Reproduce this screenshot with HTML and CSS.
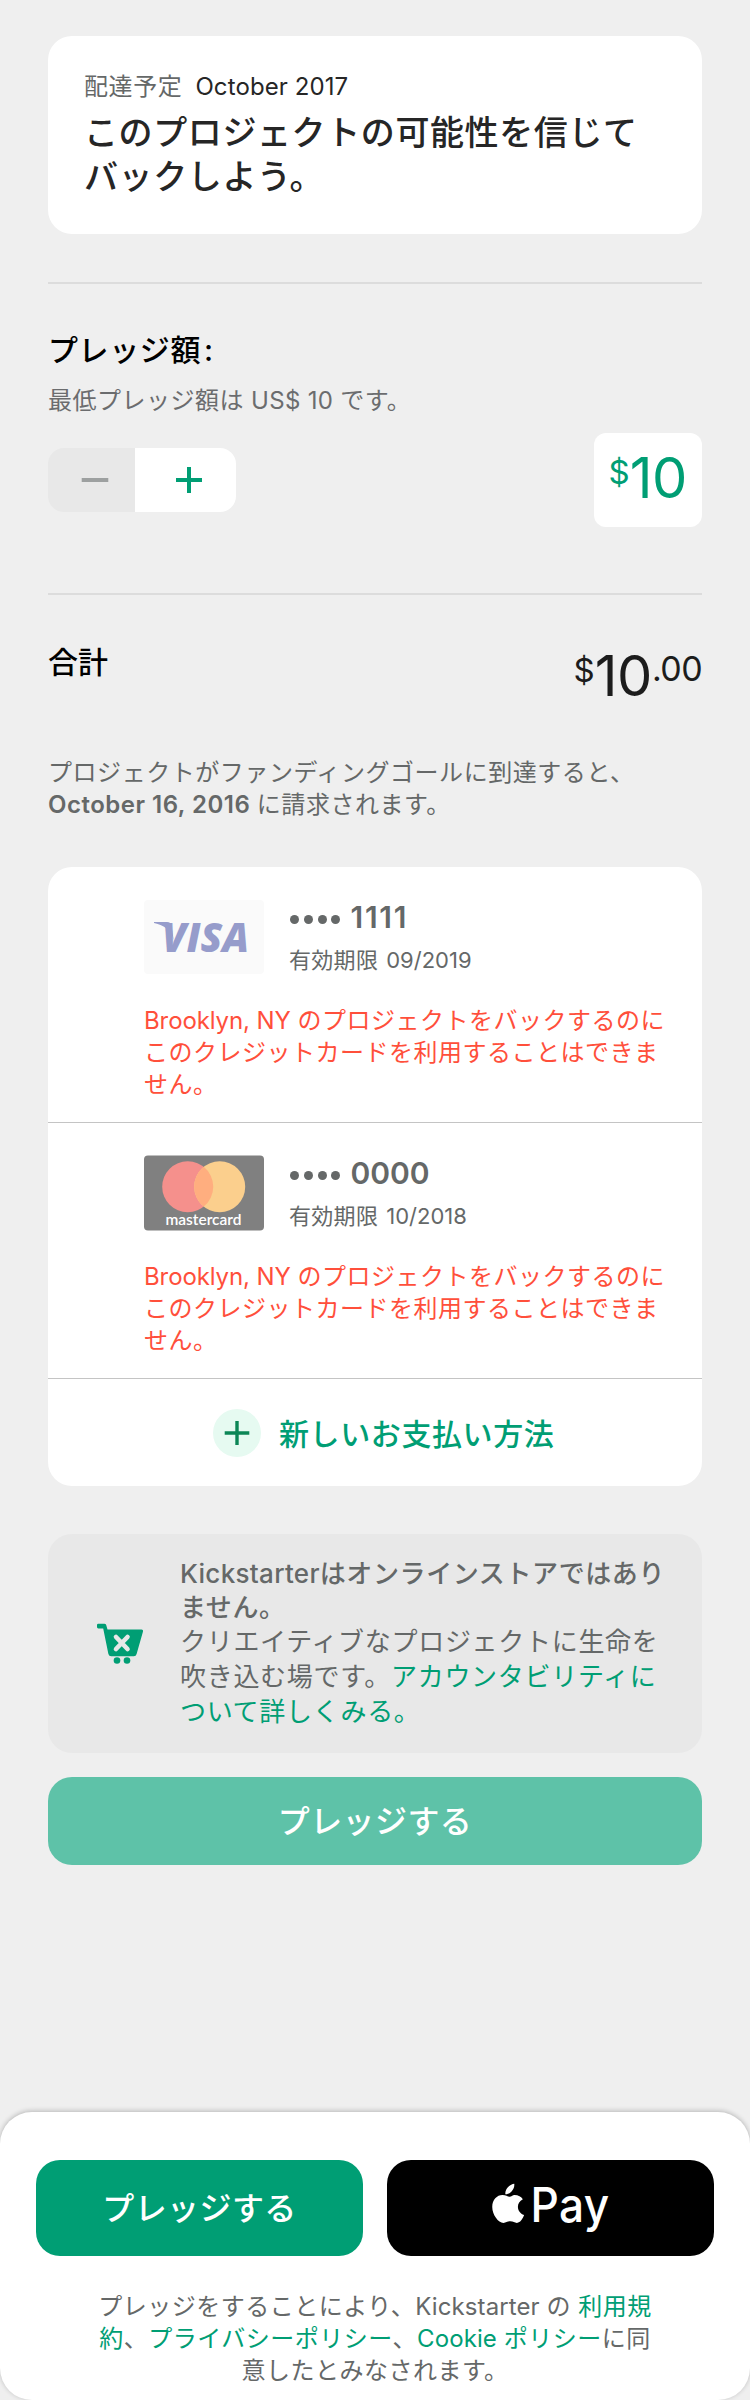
FILE: index.html
```html
<!DOCTYPE html>
<html lang="ja">
<head>
<meta charset="utf-8">
<title>プレッジ</title>
<link rel="stylesheet" href="styles.css">
</head>
<body>
<div class="screen">
  <main class="content">
    <section class="reward">
      <p class="reward-delivery"><span class="muted">配達予定</span><span class="reward-date">October 2017</span></p>
      <h1 class="reward-title">このプロジェクトの可能性を信じて<br>バックしよう。</h1>
    </section>
    <hr class="rule">
    <section class="pledge">
      <h2 class="heading">プレッジ額<span class="colon">:</span></h2>
      <p class="pledge-note">最低プレッジ額は<span class="latin-note"> US$ 10 </span>です。</p>
      <div class="pledge-row">
        <div class="stepper">
          <button class="step step-minus" aria-label="減らす"><svg width="28" height="28" viewBox="0 0 28 28"><path d="M.7 14h26.6" stroke="#9da0a0" stroke-width="4"/></svg></button>
          <button class="step step-plus" aria-label="増やす"><svg width="28" height="28" viewBox="0 0 28 28"><path d="M1 14h26M14 1v26" stroke="#009e74" stroke-width="4"/></svg></button>
        </div>
        <div class="amount-box"><span class="money"><span class="currency">$</span><span class="whole">10</span></span></div>
      </div>
    </section>
    <hr class="rule">
    <section class="total">
      <h2 class="heading total-label">合計</h2>
      <span class="money money-total"><span class="currency">$</span><span class="whole">10</span><span class="cents">.00</span></span>
    </section>
    <p class="charge-note">プロジェクトがファンディングゴールに到達すると、<br><strong class="charge-date">October 16, 2016 </strong>に請求されます。</p>

    <section class="methods">
      <article class="method">
        <div class="method-head">
          <svg class="card-art" width="120" height="76" viewBox="0 0 120 76">
            <rect y="1" width="120" height="74" rx="4" fill="#fafafa"/>
            <g fill="#969ccb">
              <path d="M10 23h13q4 0 4.600 4l2 14q-4-14-19.600-17z"/>
              <text class="visa-text" x="18" y="53" textLength="87" lengthAdjust="spacingAndGlyphs">VISA</text>
            </g>
          </svg>
          <div class="method-info">
            <p class="method-number"><span class="dots"><i></i><i></i><i></i><i></i></span><span class="digits digits-ones">1111</span></p>
            <p class="method-expiry">有効期限<span class="expiry-date">09/2019</span></p>
          </div>
        </div>
        <p class="method-error"><span class="latin-error">Brooklyn, NY </span>のプロジェクトをバックするのに<br>このクレジットカードを利用することはできま<br>せん。</p>
      </article>
      <article class="method">
        <div class="method-head">
          <svg class="card-art" width="120" height="76" viewBox="0 0 120 76">
            <rect y=".5" width="120" height="75" rx="4" fill="#808080"/>
            <circle cx="43.7" cy="31.7" r="25.5" fill="#f5908c"/>
            <circle cx="75.7" cy="31.7" r="25.5" fill="#fbcf8d"/>
            <path d="M59.7 11.8a25.5 25.5 0 0 1 0 39.8a25.5 25.5 0 0 1 0-39.8z" fill="#ffae7f"/>
            <text class="mc-text" x="21.500" y="70" textLength="76" lengthAdjust="spacingAndGlyphs">mastercard</text>
          </svg>
          <div class="method-info">
            <p class="method-number"><span class="dots"><i></i><i></i><i></i><i></i></span><span class="digits">0000</span></p>
            <p class="method-expiry">有効期限<span class="expiry-date">10/2018</span></p>
          </div>
        </div>
        <p class="method-error"><span class="latin-error">Brooklyn, NY </span>のプロジェクトをバックするのに<br>このクレジットカードを利用することはできま<br>せん。</p>
      </article>
      <button class="add-method">
        <svg width="48" height="48" viewBox="0 0 48 48"><circle cx="24" cy="24" r="24" fill="#e6faf1"/><path d="M11.7 24h24.6M24 12v24" stroke="#0c8656" stroke-width="3.4"/></svg>
        <span>新しいお支払い方法</span>
      </button>
    </section>

    <section class="notice">
      <svg class="cart" width="48" height="42" viewBox="0 0 48 42">
        <path d="M2.3 .7h6q1.500 0 1.900 1.400L11.500 6.400h34q2 0 1.500 2l-6.400 22.600q-.6 2.300-2.800 2.300H15.200q-2.200 0-2.800-2.300L7.200 5.400H2.300Q1 5.400 1 4.100V2Q1 .7 2.300.7z" fill="#009e74"/>
        <path d="M20 14l11.500 12M31.500 14L20 26" stroke="#e8e8e8" stroke-width="4.600" stroke-linecap="round"/>
        <circle cx="21" cy="37.500" r="3.300" fill="#009e74"/><circle cx="31" cy="37.500" r="3.300" fill="#009e74"/>
      </svg>
      <div class="notice-text">
        <p class="notice-strong"><span class="latin-notice">Kickstarter</span>はオンラインストアではあり<br>ません。</p>
        <p class="notice-body">クリエイティブなプロジェクトに生命を<br>吹き込む場です。<a class="link">アカウンタビリティに<br>ついて詳しくみる。</a></p>
      </div>
    </section>
    <button class="button button-disabled">プレッジする</button>
  </main>

  <footer class="sheet">
    <div class="sheet-actions">
      <button class="button button-primary">プレッジする</button>
      <button class="button button-apple" aria-label="Apple Pay">
        <svg width="120" height="60" viewBox="0 0 120 60">
          <path d="M26.800 1.500c.4 3.300-.9 6.200-2.700 8.300-1.800 2.100-4.300 3.300-6.100 3-.4-3 1-5.900 2.700-7.800 1.800-2 4.300-3.300 6.100-3.500zM27 13.500c3.800 0 6.800 2.100 8.300 4.400-3.200 1.900-4.900 4.600-4.900 8.200 0 4 2.400 7.300 6.100 8.800-1 3.200-3.600 8.300-7.100 8.300-2.500 0-3.400-1.700-6.600-1.700s-4.200 1.700-6.700 1.700C11 43.200 5 34.500 5 26.300c0-7.600 4.600-12.700 10.200-12.700 3.100 0 4.900 1.800 7 1.800 1.700 0 2.800-1.900 4.800-1.900z" transform="translate(-3.800 1.300) scale(1.010 .94)" fill="#fff"/>
          <text class="pay-text" x="39.500" y="41" textLength="79" lengthAdjust="spacingAndGlyphs">Pay</text>
        </svg>
      </button>
    </div>
    <p class="legal">プレッジをすることにより、<span class="latin-legal">Kickstarter </span>の <a class="link">利用規<br>約</a>、<a class="link">プライバシーポリシー</a>、<a class="link"><span class="latin-legal">Cookie </span>ポリシー</a>に同<br>意したとみなされます。</p>
  </footer>
</div>
</body>
</html>
```
FILE: styles.css
```css
* { box-sizing: border-box; }

body {
  margin: 0;
  background: #efefef;
  color: #262626;
  font-family: Inter, "Noto Sans CJK JP", sans-serif;
}

h1, h2, p { margin: 0; white-space: nowrap; }

button {
  border: 0;
  padding: 0;
  font: inherit;
  background: none;
}

svg { display: block; flex: none; overflow: visible; }

.screen {
  width: 750px;
  height: 2400px;
  display: flex;
  flex-direction: column;
  justify-content: space-between;
}

.content {
  display: flex;
  flex-direction: column;
  padding: 36px 48px 0;
}

.muted { color: #656868; }
.link { color: #009e74; }

.rule {
  width: 100%;
  height: 2px;
  margin: 0;
  border: 0;
  background: #dcdcdc;
}

.heading {
  color: #000;
  font-size: 30px;
  font-weight: 500;
  line-height: 36px;
  letter-spacing: 0.6px;
}

.colon { margin-left: 3px; }

.reward {
  height: 198px;
  margin-bottom: 48px;
  padding: 35px 36px 0;
  border-radius: 24px;
  background: #fff;
}

.reward-delivery {
  display: flex;
  gap: 13px;
  font-size: 24px;
  line-height: 32px;
  letter-spacing: 0.6px;
}

.reward-date { letter-spacing: 0.1px; }

.reward-title {
  margin-top: 8px;
  font-size: 34px;
  font-weight: 500;
  line-height: 44px;
  letter-spacing: 0.6px;
}

.pledge { height: 309px; padding-top: 48px; }

.pledge-note {
  margin-top: 17px;
  color: #6b6c6e;
  font-size: 24px;
  line-height: 32px;
  letter-spacing: 0.5px;
}

.latin-note { letter-spacing: 0.3px; }

.pledge-row {
  display: flex;
  align-items: center;
  justify-content: space-between;
  margin-top: 16px;
}

.stepper {
  display: flex;
  width: 188px;
  height: 64px;
  overflow: hidden;
  border-radius: 16px;
}

.step { display: flex; align-items: center; }
.step-minus { width: 87px; padding-left: 33px; background: #e8e8e8; }
.step-plus { width: 101px; padding-left: 40px; background: #fff; }

.amount-box {
  display: flex;
  justify-content: flex-end;
  width: 108px;
  height: 94px;
  padding: 13px 15px 0 0;
  border-radius: 12px;
  background: #fff;
  color: #009e74;
}

.money { display: flex; align-items: flex-start; }
.whole { font-size: 56px; line-height: 64px; letter-spacing: -0.4px; }
.currency { margin-right: 0; font-size: 33px; line-height: 52px; }
.cents { font-size: 34px; line-height: 50px; letter-spacing: -0.6px; }

.total {
  display: flex;
  justify-content: space-between;
  padding-top: 49px;
}

.total-label { letter-spacing: 0; }
.money-total { color: #1c1c1c; }

.charge-note {
  margin-top: 49px;
  color: #656868;
  font-size: 24px;
  line-height: 32px;
  letter-spacing: 0.55px;
}

.charge-date { font-weight: 600; letter-spacing: 0.5px; }

.methods {
  height: 619px;
  margin-top: 46px;
  border-radius: 24px;
  background: #fff;
}

.method {
  height: 256px;
  padding: 32px 0 0 96px;
  border-bottom: 1px solid #c4c4c4;
}

.method-head { display: flex; gap: 25px; }
.method-info { color: #656868; }

.method-number {
  display: flex;
  align-items: center;
  gap: 10px;
  font-size: 30px;
  font-weight: 600;
  line-height: 36px;
}

.dots { display: flex; gap: 4.800px; padding: 4px 0 0 1px; }
.dots i { width: 9px; height: 9px; border-radius: 50%; background: #656868; }
.digits-ones { letter-spacing: 1.8px; }

.method-expiry {
  display: flex;
  gap: 8px;
  margin-top: 11px;
  font-size: 22px;
  line-height: 28px;
  letter-spacing: 0.3px;
}

.expiry-date { letter-spacing: 0; }

.method-error {
  margin-top: 30px;
  color: #ff4f3b;
  font-size: 24px;
  line-height: 32px;
  letter-spacing: 0.5px;
}

.latin-error { letter-spacing: -0.1px; }

.visa-text { font: italic 800 41px "Open Sans", sans-serif; }
.mc-text { font: 600 16px Lato, sans-serif; fill: #fff; }

.add-method {
  display: flex;
  align-items: center;
  gap: 18px;
  width: 100%;
  height: 107px;
  padding: 0 0 0 165px;
  color: #009e74;
  font-size: 30px;
  font-weight: 500;
  letter-spacing: 0.600px;
}

.add-method span { padding-bottom: 2px; }

.notice {
  display: flex;
  height: 219px;
  margin-top: 48px;
  padding-left: 48px;
  border-radius: 24px;
  background: #e8e8e8;
  color: #656868;
  font-size: 26px;
}

.cart { margin-top: 89px; }
.notice-text { padding: 23px 0 0 36px; }
.notice-strong { font-weight: 500; line-height: 34px; letter-spacing: 0.6px; }
.latin-notice { letter-spacing: 0.3px; }
.notice-body { margin-top: -1px; line-height: 35px; letter-spacing: 0.7px; }

.button {
  flex: 1;
  height: 96px;
  padding-bottom: 5px;
  border-radius: 24px;
  color: #fff;
  font-size: 32px;
  font-weight: 500;
  letter-spacing: 0.4px;
}

.button-disabled {
  flex: none;
  height: 88px;
  margin-top: 24px;
  background: #5ec2a8;
}

.button-primary { background: #009e74; }

.button-apple {
  display: flex;
  justify-content: center;
  padding: 21px 0 0 0;
  background: #000;
}

.pay-text { font: 500 48px Inter, sans-serif; fill: #fff; }

.sheet {
  height: 288px;
  padding: 48px 36px 0;
  border-radius: 32px;
  background: #fff;
  box-shadow: 0 -1px 5px rgba(0, 0, 0, 0.24);
}

.sheet-actions { display: flex; gap: 24px; }

.legal {
  margin-top: 35px;
  color: #656868;
  font-size: 24px;
  line-height: 32px;
  letter-spacing: 0.5px;
  text-align: center;
}

.latin-legal { letter-spacing: 0.1px; }
```
